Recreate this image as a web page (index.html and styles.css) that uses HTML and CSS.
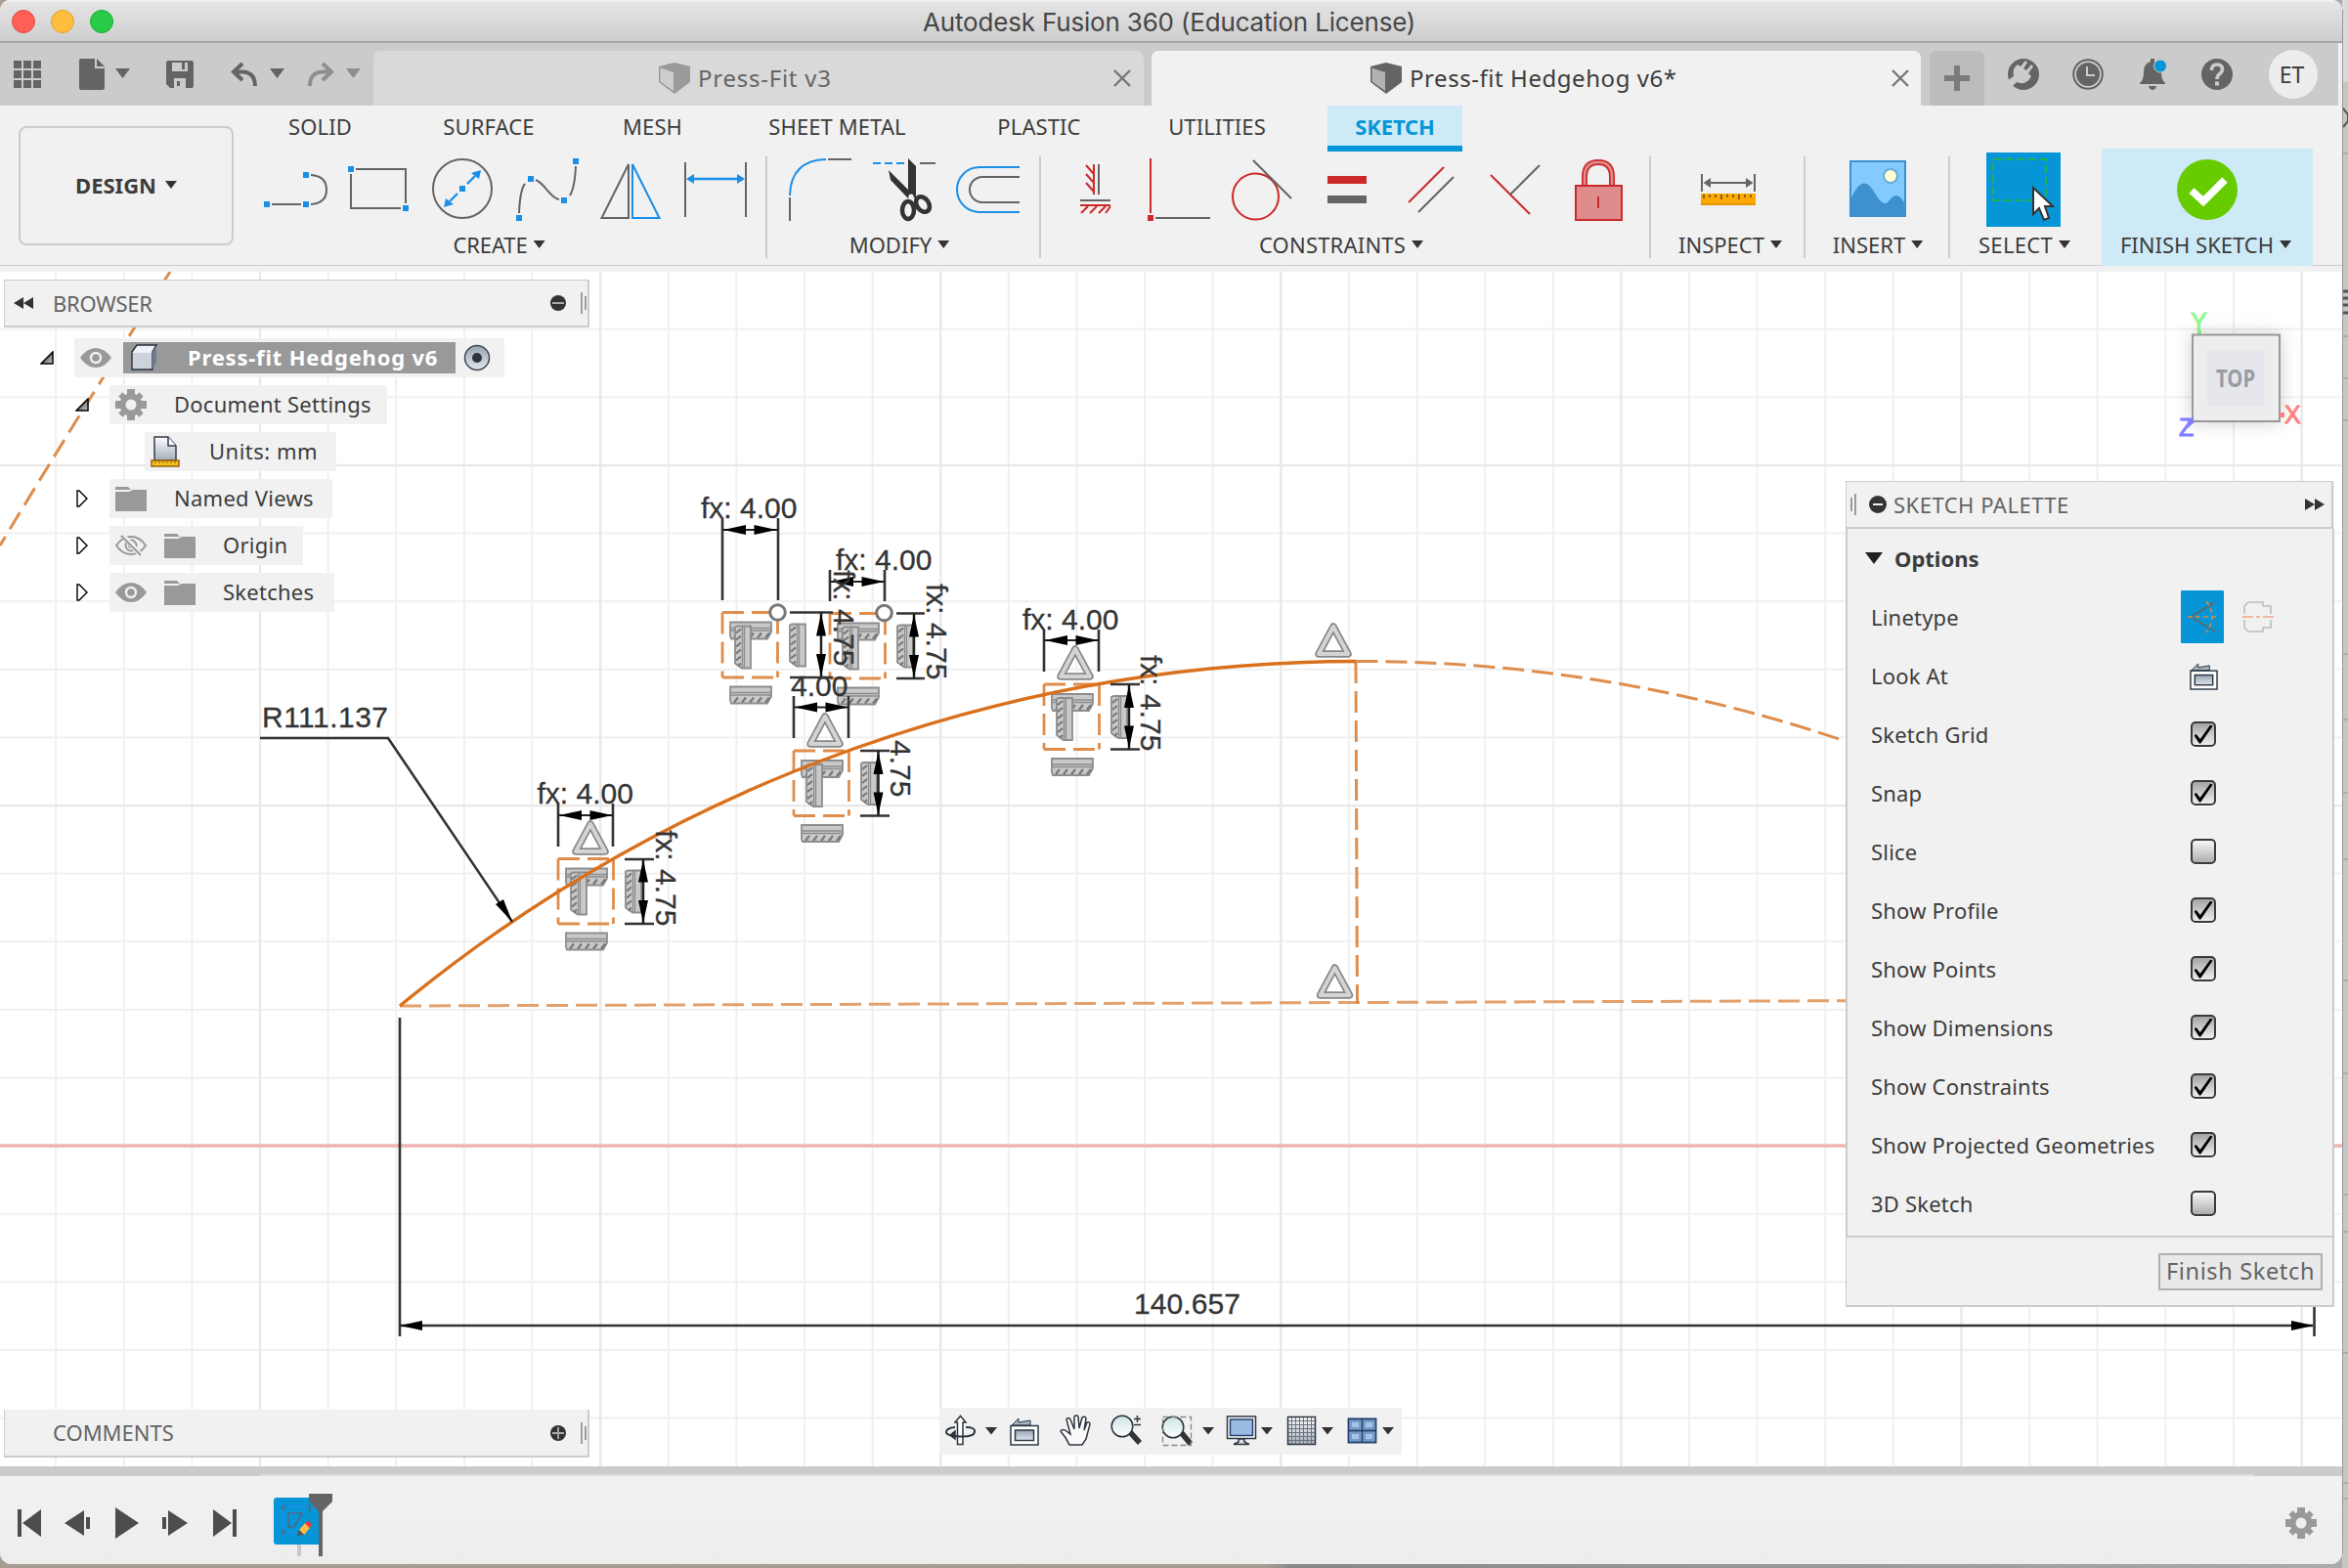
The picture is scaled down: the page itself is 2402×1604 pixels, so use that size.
FILE: index.html
```html
<!DOCTYPE html>
<html lang="en">
<head>
<meta charset="utf-8">
<title>Autodesk Fusion 360 (Education License)</title>
<link rel="stylesheet" href="styles.css">
</head>
<body>
<svg class="defs" width="0" height="0" aria-hidden="true">
  <defs>
    <linearGradient id="steel" x1="0" y1="0" x2="0" y2="1"><stop offset="0" stop-color="#fff"/><stop offset="1" stop-color="#a4adba"/></linearGradient>
    <linearGradient id="lens" x1="0" y1="0" x2="0" y2="1"><stop offset="0" stop-color="#cfe5e2"/><stop offset="1" stop-color="#fbffff"/></linearGradient>
    <linearGradient id="screen" x1="0" y1="0" x2="0" y2="1"><stop offset="0" stop-color="#98a3b3"/><stop offset="1" stop-color="#e0e6ee"/></linearGradient>
    <linearGradient id="corner" x1="0" y1="0" x2="1" y2="1"><stop offset="0" stop-color="#222"/><stop offset="1" stop-color="#ccc"/></linearGradient>
    <symbol id="eye" viewBox="0 0 32 22"><path d="M0 11Q7 1 16 1T32 11Q25 21 16 21T0 11Z" fill="#999"/><circle cx="16" cy="11" r="5" fill="none" stroke="#f1f1f1" stroke-width="2.4"/></symbol>
    <symbol id="eye-off" viewBox="0 0 32 22"><g fill="none" stroke="#999" stroke-width="2"><path d="M1 11Q7 2 16 2T31 11Q25 20 16 20T1 11Z"/><circle cx="16" cy="11" r="5.5"/><circle cx="16" cy="11" r="2"/></g><path d="M7 0 27 22" stroke="#f1f1f1" stroke-width="5"/><path d="M6 1 26 21" stroke="#999" stroke-width="2"/></symbol>
    <symbol id="folder" viewBox="0 0 32 26"><path d="M0 1H13L16 4H0ZM0 6H14L18 4H32V26H0Z" fill="#999"/></symbol>
    <symbol id="gear" viewBox="-16 -16 32 32"><g fill="#999"><path id="cog" d="M-4-16H4V-8H-4ZM-4 8H4V16H-4ZM-16-4H-8V4H-16ZM8-4H16V4H8Z"/><path transform="rotate(45)" d="M-3-15H3V-8H-3ZM-3 8H3V15H-3ZM-15-3H-8V3H-15ZM8-3H15V3H8Z"/></g><circle r="8.5" fill="none" stroke="#999" stroke-width="6"/></symbol>
    <symbol id="twist" viewBox="0 0 14 14"><path d="M1 13H13V1Z" fill="url(#corner)" stroke="#000" stroke-width="1.5"/></symbol>
    <symbol id="closed" viewBox="0 0 14 18"><path d="M2 1V17H4L12 9 4 1Z" fill="#fff" stroke="#000" stroke-width="1.4"/></symbol>
    <symbol id="look" viewBox="0 0 30 30"><path d="M2 9 9 2V6L21 4V9Z" fill="#a5b1ba" stroke="#2d3845"/><rect x="1" y="9.500" width="28" height="19.500" fill="#fff" stroke="#2d3845" stroke-width="1.5"/><rect x="5.500" y="14" width="19" height="10.500" fill="url(#screen)" stroke="#2d3845" stroke-width="1.5"/></symbol>
    <symbol id="cube" viewBox="0 0 32 32"><path d="M0 4 16 0 32 4V20L16 32 0 20Z" fill="currentColor"/><path d="M1.500 5.500 15 10V29L1.500 19.500Z" fill="#fff" opacity=".5"/></symbol>
    <symbol id="close" viewBox="0 0 18 18"><path d="M1 1 17 17M17 1 1 17" stroke="#777" stroke-width="2.4"/></symbol>

    <g id="tri"><path d="M0 2 15 30H-15Z" fill="none" stroke="#888" stroke-width="7.500" stroke-linejoin="round"/><path d="M0 2 15 30H-15Z" fill="none" stroke="#d4d4d4" stroke-width="4" stroke-linejoin="round"/></g>
    <g id="hc"><path d="M1 1H43V11L39 18H2L1 15Z" fill="#c9c9c9" stroke="#8d8d8d" stroke-width="1.800"/><path d="M1 7H43M1 9.500H43" stroke="#8d8d8d" stroke-width="1.300"/><path d="M5 17 9 12M13 17 17 12M21 17 25 12M29 17 33 12M37 17 41 12" stroke="#777" stroke-width="2.200"/></g>
    <g id="vc"><path d="M18 1V44H9L2 39V2L4 1Z" fill="#c9c9c9" stroke="#8d8d8d" stroke-width="1.800"/><path d="M11.500 1V44M9.500 1V44" stroke="#8d8d8d" stroke-width="1.300"/><path d="M3 8 8 4M3 15 8 11M3 22 8 18M3 29 8 25M3 36 8 32M5 42 8 39" stroke="#777" stroke-width="2.200"/></g>
    <g id="ha"><path d="M0 0H56.500" stroke="#222" stroke-width="2"/><path d="M1 0 24-5V5ZM55.500 0 32.500-5V5Z"/></g>
    <g id="va"><path d="M0 0V66.500" stroke="#222" stroke-width="2.500"/><path d="M0 1-5 24H5ZM0 65.500-5 42.500H5Z"/></g>
    <g id="slot">
      <use href="#hc" x="7" y="9"/><use href="#vc" x="11" y="13"/><use href="#hc" x="7" y="75"/><use href="#vc" x="67" y="11"/>
      <path d="M0 0H56.500M56.500 0V66.500M0 66.500H56.500M0 0V66.500" fill="none" stroke="#de8d4c" stroke-width="2.800" stroke-dasharray="22 8"/>
    </g>
  </defs>
</svg>

<div class="window">
  <header class="titlebar">
    <span class="light red"></span><span class="light amber"></span><span class="light green"></span>
    <h1 class="title">Autodesk Fusion 360 (Education License)</h1>
  </header>

  <nav class="docbar">
    <svg class="quick" viewBox="0 44 382 64" width="382" height="64">
      <g fill="#646464">
        <path d="M14 62h8v8h-8zM24 62h8v8h-8zM34 62h8v8h-8zM14 72h8v8h-8zM24 72h8v8h-8zM34 72h8v8h-8zM14 82h8v8h-8zM24 82h8v8h-8zM34 82h8v8h-8z"/>
        <path d="M83 60H97V70H107V90Q107 92 105 92H83Q81 92 81 90V62Q81 60 83 60ZM99 60 107 68H99Z"/>
        <path d="M118 70H133L125.500 80ZM276 70H291L283.500 80Z"/>
        <path fill-rule="evenodd" d="M172 62H196Q198 62 198 64V88Q198 90 196 90H174L170 86V64Q170 62 172 62ZM176 64V73H192V64H189V71H186V64ZM178 80V90H190V80ZM181 83H184V88H181Z"/>
      </g>
      <path d="M248 65 239 73.500 248 82M240 73.500H248Q261 74 261 88" fill="none" stroke="#646464" stroke-width="4"/>
      <path d="M330 65 339 73.500 330 82M338 73.500H330Q317 74 317 88" fill="none" stroke="#8e8e8e" stroke-width="4"/>
      <path d="M354 70H369L361.500 80Z" fill="#8e8e8e"/>
    </svg>
    <div class="doc inactive"><svg class="cube"><use href="#cube"/></svg><span class="doc-a">Press-Fit v3</span><svg class="close"><use href="#close"/></svg></div>
    <div class="doc active"><svg class="cube"><use href="#cube"/></svg><span class="doc-b">Press-fit Hedgehog v6*</span><svg class="close"><use href="#close"/></svg></div>
    <button class="new" aria-label="New"><svg width="26" height="26" viewBox="0 0 26 26"><path d="M13 0V26M0 13H26" stroke="#7b7b7b" stroke-width="6"/></svg></button>
    <svg class="status" viewBox="2030 44 280 64" width="280" height="64">
      <circle cx="2070" cy="76" r="16" fill="#646464"/>
      <path d="M2054 82 2060 78Q2058 70 2064 66L2067 68 2072 62 2074 64 2070 70 2073 72 2078 66 2080 68 2075 75 2078 78Q2073 88 2063 84L2058 89Z" fill="#cbcbcb"/>
      <circle cx="2136" cy="76" r="14.800" fill="none" stroke="#646464" stroke-width="2"/><circle cx="2136" cy="76" r="12" fill="#646464"/>
      <path d="M2135 68V77H2143" fill="none" stroke="#cbcbcb" stroke-width="2"/>
      <path d="M2200 60H2204V63Q2211 65 2211 74 2211 82 2215 85V86H2189V85Q2193 82 2193 74 2193 65 2200 63ZM2198 88H2206Q2205 92 2202 92T2198 88Z" fill="#646464"/>
      <circle cx="2210" cy="67.500" r="6.500" fill="#0696d7" stroke="#cbcbcb"/>
      <circle cx="2268" cy="76" r="16" fill="#646464"/>
      <path d="M2262.500 72Q2262.500 66 2268 66T2273.500 71C2273.500 76 2268 75 2268 81" fill="none" stroke="#cbcbcb" stroke-width="3.600"/><path d="M2266 83.500h4v4h-4z" fill="#cbcbcb"/>
    </svg>
    <span class="avatar">ET</span>
  </nav>

  <section class="ribbon">
    <button class="workspace">DESIGN <i class="caret"></i></button>
    <div class="tools">
      <ul class="tabs"><li>SOLID</li><li>SURFACE</li><li>MESH</li><li>SHEET METAL</li><li>PLASTIC</li><li>UTILITIES</li><li class="current">SKETCH</li></ul>
      <div class="groups">
        <div class="group create">
          <svg viewBox="250 156 534 80" width="534" height="80">
            <g fill="none" stroke="#646464" stroke-width="2">
              <path d="M278 209H308M318 179Q334 180 334 194T318 209"/>
              <path d="M364 173H415V208M359 178V213H410"/>
              <circle cx="473" cy="193" r="30"/>
              <path d="M531 218Q532 194 537 188M548 184C558 188 562 202 572 204M583 200Q588 192 589 170"/>
              <path d="M643 168V223H615.500ZM701 166V222M763 166V222"/>
            </g>
            <path d="M647 168V223H674.500Z" fill="none" stroke="#1a8fe8" stroke-width="2"/>
            <path d="M704 183H760M478 188 486 180M468 198 460 206" stroke="#1a8fe8" stroke-width="2.400"/>
            <path d="M702 183 710 178V188ZM762 183 754 178V188ZM492 174 490 183 482 177ZM454 212 456 203 464 209Z" fill="#1a8fe8"/>
            <path d="M270 206h6v6h-6zM310 206h6v6h-6zM310 176h6v6h-6zM356 170h6v6h-6zM412 210h6v6h-6zM470 190h6v6h-6zM528 220h6v6h-6zM540 180h6v6h-6zM574 202h6v6h-6zM586 162h6v6h-6z" fill="#1a8fe8"/>
          </svg>
          <span>CREATE<i class="caret"></i></span>
        </div>
        <div class="group modify">
          <svg viewBox="786 156 278 80" width="278" height="80">
            <g fill="none" stroke-width="2">
              <path d="M809 202V226M848 163H872M942 167H958M1044 181H1006A13 13 0 0 0 1006 207H1044" stroke="#646464"/>
              <path d="M809 200Q810 164 846 163M894 167H926" stroke="#1a8fe8"/>
              <path d="M1044 171H1003A23 23 0 0 0 1003 217H1044" stroke="#1a8fe8"/>
            </g>
            <path d="M902 165h4v4h-4zM914 165h4v4h-4z" fill="#f1f1f1"/>
            <path d="M930 162 938 170V203L930 199ZM910 174 934 198 930 203 912 184Z" fill="#333"/>
            <ellipse cx="930" cy="215" rx="6" ry="9" fill="none" stroke="#333" stroke-width="4.500"/>
            <ellipse cx="945" cy="209" rx="6" ry="8.500" transform="rotate(-35 945 209)" fill="none" stroke="#333" stroke-width="4.500"/>
            <circle cx="933" cy="201" r="2.600" fill="#f1f1f1"/>
          </svg>
          <span>MODIFY<i class="caret"></i></span>
        </div>
        <div class="group constraints">
          <svg viewBox="1066 156 622 80" width="622" height="80">
            <g fill="none" stroke="#cc2929" stroke-width="2">
              <path d="M1119 168V199M1111 169 1119 178M1111 178 1119 187M1111 187 1119 196M1105 210H1136M1113 211 1106 218M1122 211 1115 218M1131 211 1124 218M1136 211 1131 218"/>
              <path d="M1177 162V218M1441 207 1477 171M1525 179 1565 219"/><circle cx="1284.500" cy="201" r="23.500"/>
            </g>
            <path d="M1124 168V199M1105 205H1136M1182 223H1238M1282 164 1321 203M1451 217 1487 181M1545 199 1575 169" fill="none" stroke="#646464" stroke-width="2"/>
            <path d="M1174 220h6v6h-6zM1358 180h40v8h-40z" fill="#cc2929"/><path d="M1358 200h40v8h-40z" fill="#646464"/>
            <path d="M1621 190V181Q1621 166 1635 166T1649 181V190" fill="none" stroke="#cc2929" stroke-width="6"/>
            <path d="M1621 190V181Q1621 166 1635 166T1649 181V190" fill="none" stroke="#df8c8c" stroke-width="2.600"/>
            <rect x="1612" y="190" width="47" height="35" fill="#df8c8c" stroke="#cc2929" stroke-width="2"/><path d="M1635 201V213" stroke="#cc2929" stroke-width="2"/>
          </svg>
          <span>CONSTRAINTS<i class="caret"></i></span>
        </div>
        <div class="group inspect">
          <svg viewBox="1690 156 156 80" width="156" height="80">
            <path d="M1741 178V196M1795 178V196M1745 187H1791" stroke="#646464" stroke-width="2"/><path d="M1742.500 187 1750 182V192ZM1793.500 187 1786 182V192Z" fill="#646464"/>
            <path d="M1740 198h56v12h-56z" fill="#ffa800"/><path d="M1740 208h56v2h-56z" fill="#e39400"/>
            <path d="M1743 199V203M1749 199V202M1755 199V202M1761 199V204M1767 199V202M1773 199V202M1779 199V204M1785 199V202M1791 199V202" stroke="#5d4c25" stroke-width="1.500"/>
          </svg>
          <span>INSPECT<i class="caret"></i></span>
        </div>
        <div class="group insert">
          <svg viewBox="1848 156 146 80" width="146" height="80">
            <rect x="1893" y="165" width="56" height="56" fill="#83caff" stroke="#3d91ce" stroke-width="2"/>
            <circle cx="1934" cy="180" r="7" fill="#ffffd0" stroke="#62acdf" stroke-width="2"/>
            <path d="M1893 205C1902 183 1910 184 1917 196Q1926 212 1931 207C1938 198 1942 197 1949 209V221H1893Z" fill="#3d91ce"/>
          </svg>
          <span>INSERT<i class="caret"></i></span>
        </div>
        <div class="group select">
          <svg viewBox="1996 156 154 80" width="154" height="80">
            <path d="M2032 156h76v76h-76z" fill="#0696d7"/><rect x="2039" y="163" width="54" height="42" fill="none" stroke="#22b24c" stroke-width="2" stroke-dasharray="8 4"/>
            <path d="M2080 192V219L2086 213 2091 225 2096 223 2092 211H2100Z" fill="#fff" stroke="#333" stroke-width="2"/>
          </svg>
          <span>SELECT<i class="caret"></i></span>
        </div>
        <div class="group finish">
          <svg viewBox="2150 156 216 80" width="216" height="80"><circle cx="2258" cy="194" r="31" fill="#6c0"/><path d="M2242 195 2254 206 2276 184" fill="none" stroke="#fff" stroke-width="7.500"/></svg>
          <span>FINISH SKETCH<i class="caret"></i></span>
        </div>
      </div>
    </div>
  </section>

  <main class="canvas">
    <svg class="drawing" viewBox="0 278 2396 1222" width="2396" height="1222">
      <defs>
        <pattern id="minor" x="265" y="823" width="69.620" height="69.620" patternUnits="userSpaceOnUse"><path d="M0 0H69.620M0 0V69.620" stroke="#f0f0f0" stroke-width="4" fill="none"/></pattern>
        <pattern id="major" x="265" y="823" width="348.100" height="348.100" patternUnits="userSpaceOnUse"><path d="M0 1H349M1 0V349" stroke="#e8e8e8" stroke-width="2.400" fill="none"/></pattern>
      </defs>
      <rect x="0" y="278" width="2396" height="1222" fill="url(#minor)"/>
      <rect x="0" y="278" width="2396" height="1222" fill="url(#major)"/>
      <path d="M0 1172H2396" stroke="#efb4b4" stroke-width="3.400"/>

      <use href="#slot" x="739" y="626.500"/><use href="#slot" x="849" y="627.500"/><use href="#slot" x="812" y="768"/><use href="#slot" x="1068" y="700"/><use href="#slot" x="571" y="878.500"/>
      <use href="#tri" x="604" y="841"/><use href="#tri" x="844" y="731"/><use href="#tri" x="1100" y="662"/><use href="#tri" x="1364" y="639"/><use href="#tri" x="1365.500" y="988"/>

      <g fill="none" stroke="#de8d4c" stroke-width="3">
        <path d="M174 278Q80 425 0 558" stroke-dasharray="20 9"/>
        <path d="M409 1029 2366 1022" stroke="#e3a06b" stroke-dasharray="22 8"/>
        <path d="M1387 677 1388.500 1027" stroke-dasharray="22 8"/>
        <path d="M1387.500 676.500A1546 1546 0 0 1 2366 1022" stroke-dasharray="22 8"/>
        <path d="M409 1029A1546 1546 0 0 1 1387.500 676.500" stroke="#d9701c" stroke-width="3.400"/>
      </g>

      <g fill="none" stroke="#333" stroke-width="2.600">
        <path d="M266 755H397L524 943M409 1041V1367M409 1356H2366M2367.500 1336V1367"/>
        <path d="M739 530V614M796 530V614M849 583V615M905 583V615M812 712V755M868 712V755M1068 644V687M1124 644V687M571 822V866M627 822V866"/>
        <path d="M808 626.500H852M808 693H852M917 627.500H946M917 694H946M880 768H910M880 834.500H910M1136 700H1166M1136 766.500H1166M639 879H669M639 945H669"/>
      </g>
      <g fill="#000">
        <use href="#ha" x="739" y="542"/><use href="#ha" x="849" y="595"/><use href="#ha" x="812" y="723.500"/><use href="#ha" x="1068" y="655"/><use href="#ha" x="571" y="834"/>
        <use href="#va" x="840" y="626.500"/><use href="#va" x="935" y="627.500"/><use href="#va" x="898.500" y="768"/><use href="#va" x="1155" y="700"/><use href="#va" x="658" y="878.500"/>
        <path d="M524 943 507 925 515 920ZM409 1356 432 1351V1361ZM2367 1356 2344 1351V1361Z"/>
      </g>
      <g fill="#fff" stroke="#777" stroke-width="3"><circle cx="795.500" cy="626.500" r="7.800"/><circle cx="904.500" cy="627" r="7.800"/></g>
      <g class="dim">
        <text x="268" y="743.500" textLength="129">R111.137</text>
        <text x="1160" y="1343.500" textLength="109">140.657</text>
        <text x="717" y="530">fx: 4.00</text><text x="855" y="583">fx: 4.00</text><text x="809" y="711.500">4.00</text><text x="1046" y="643.500">fx: 4.00</text><text x="549.500" y="822">fx: 4.00</text>
        <text transform="translate(852.500 583) rotate(90)">fx: 4.75</text><text transform="translate(947.500 597) rotate(90)">fx: 4.75</text><text transform="translate(910.500 757) rotate(90)">4.75</text><text transform="translate(1166.500 670) rotate(90)">fx: 4.75</text><text transform="translate(670.500 849) rotate(90)">fx: 4.75</text>
      </g>

      <g class="viewcube">
        <text x="2241" y="338" fill="#8dfb8d" stroke="#8dfb8d">Y</text><path d="M2248 338h4v5h-4z" fill="#8dfb8d"/>
        <rect class="cube-face" x="2243" y="342.500" width="89" height="88.500" fill="#eee" fill-opacity=".95" stroke="#999" stroke-width="2"/><path d="M2258 358h58v58h-58z" fill="#e5e7ec"/>
        <text class="top" x="2267" y="396" textLength="40" lengthAdjust="spacingAndGlyphs">TOP</text>
        <text x="2337" y="433" fill="#ff8080" stroke="#ff8080">X</text><path d="M2332 422h5v5h-5z" fill="#ff8080"/>
        <text x="2229" y="446" fill="#7f7fff" stroke="#7f7fff">Z</text><path d="M2238 430 2246 431 2238 438Z" fill="#7f7fff"/>
      </g>
    </svg>

    <aside class="browser">
      <header class="panel-head">
        <svg width="20" height="12" viewBox="0 0 20 12"><path d="M0 6 10 0V12ZM10 6 20 0V12Z" fill="#333"/></svg>
        <span class="name">BROWSER</span>
        <svg class="knob" width="16" height="16" viewBox="0 0 16 16"><circle cx="8" cy="8" r="8" fill="#333"/><path d="M2 8H14" stroke="#aaa" stroke-width="2"/></svg>
        <svg class="grip" width="6" height="22" viewBox="0 0 6 22"><path d="M1 0V22M5 4V18" stroke="#888" stroke-width="1.600"/></svg>
      </header>
      <ul class="tree">
        <li class="l1"><svg class="tw"><use href="#twist"/></svg><div class="node root"><svg class="eye"><use href="#eye"/></svg>
          <b><svg width="28" height="28" viewBox="0 0 28 28"><path d="M1 8 6 1H26L22 8V26H1Z" fill="#eef1f5" stroke="#222c3a" stroke-width="1.400"/><path d="M22 8 26 2V19L22 26Z" fill="#6f7c90"/><path d="M2 9H21V25H2Z" fill="#cdd3db"/></svg><em>Press-fit Hedgehog v6</em></b>
          <svg class="radio" width="28" height="28" viewBox="0 0 28 28"><circle cx="14" cy="14" r="12.500" fill="url(#screen)" stroke="#3f4650" stroke-width="1.500"/><circle cx="14" cy="14" r="5" fill="#2c333d"/></svg></div></li>
        <li class="l2"><svg class="tw"><use href="#twist"/></svg><div class="node w284"><svg class="gear"><use href="#gear"/></svg><span>Document Settings</span></div></li>
        <li class="l3"><div class="node w196"><svg class="units" width="30" height="32" viewBox="0 0 30 32"><path d="M4 1H18L26 10V25H4Z" fill="url(#steel)" stroke="#333d4d" stroke-width="1.500"/><path d="M18 1V10H26" fill="#fff" stroke="#333d4d" stroke-width="1.500"/><path d="M1 25H29V31H1Z" fill="#f2c21d" stroke="#9c5c0c" stroke-width="1.500"/><path d="M5 26V28M9 26V28M13 26V28M17 26V28M21 26V28M25 26V28" stroke="#9c5c0c"/></svg><span class="unit-name">Units: mm</span></div></li>
        <li class="l2"><svg class="tw shut"><use href="#closed"/></svg><div class="node w228"><svg class="folder"><use href="#folder"/></svg><span>Named Views</span></div></li>
        <li class="l2"><svg class="tw shut"><use href="#closed"/></svg><div class="node w198"><svg class="eye"><use href="#eye-off"/></svg><svg class="folder"><use href="#folder"/></svg><span>Origin</span></div></li>
        <li class="l2"><svg class="tw shut"><use href="#closed"/></svg><div class="node w230"><svg class="eye"><use href="#eye"/></svg><svg class="folder"><use href="#folder"/></svg><span>Sketches</span></div></li>
      </ul>
    </aside>

    <aside class="palette">
      <header class="panel-head">
        <svg width="6" height="22" viewBox="0 0 6 22"><path d="M1 4V18M5 0V22" stroke="#888" stroke-width="1.600"/></svg>
        <svg class="knob" width="18" height="18" viewBox="0 0 18 18"><circle cx="9" cy="9" r="9" fill="#333"/><path d="M4 9H14" stroke="#eee" stroke-width="2"/></svg>
        <span class="name">SKETCH PALETTE</span>
        <svg class="fwd" width="20" height="12" viewBox="0 0 20 12"><path d="M0 0 10 6 0 12ZM10 0 20 6 10 12Z" fill="#333"/></svg>
      </header>
      <div class="options">
        <h2><svg width="18" height="12" viewBox="0 0 18 12"><path d="M0 0H18L9 12Z" fill="#222"/></svg>Options</h2>
        <div class="row"><span>Linetype</span><div class="ctl wide"><svg width="44" height="54" viewBox="0 0 44 54"><rect width="44" height="54" rx="1" fill="#0696d7"/><path d="M35 12 10 27 35 42" fill="none" stroke="#646464" stroke-width="1.600"/><path d="M7 27H38" stroke="#e0883c" stroke-width="1.600" stroke-dasharray="5 3"/><path d="M26 11Q38 27 26 43" fill="none" stroke="#e0883c" stroke-width="1.400" stroke-dasharray="5 3"/></svg><svg class="center-line" width="32" height="32" viewBox="0 0 32 32"><path d="M2 13V5L6 1H21V5H29V13M2 19V27L6 31H21V27H29V19" fill="none" stroke="#bdbdbd" stroke-width="1.600"/><path d="M0 16H11M14 16H18M21 16H32" stroke="#f2b998" stroke-width="1.800"/></svg></div></div>
        <div class="row"><span>Look At</span><div class="ctl"><svg class="lookat" width="29" height="29"><use href="#look"/></svg></div></div>
        <label class="row"><span>Sketch Grid</span><i class="check on"></i></label>
        <label class="row"><span>Snap</span><i class="check on"></i></label>
        <label class="row"><span>Slice</span><i class="check"></i></label>
        <label class="row"><span>Show Profile</span><i class="check on"></i></label>
        <label class="row"><span>Show Points</span><i class="check on"></i></label>
        <label class="row"><span>Show Dimensions</span><i class="check on"></i></label>
        <label class="row"><span>Show Constraints</span><i class="check on"></i></label>
        <label class="row"><span>Show Projected Geometries</span><i class="check on"></i></label>
        <label class="row"><span>3D Sketch</span><i class="check"></i></label>
      </div>
      <footer><button>Finish Sketch</button></footer>
    </aside>

    <aside class="comments panel-head">
      <span class="name">COMMENTS</span>
      <svg class="knob" width="16" height="16" viewBox="0 0 16 16"><circle cx="8" cy="8" r="8" fill="#333"/><path d="M2 8H14M8 2V14" stroke="#aaa" stroke-width="1.800"/></svg>
      <svg class="grip" width="6" height="22" viewBox="0 0 6 22"><path d="M1 0V22M5 4V18" stroke="#888" stroke-width="1.600"/></svg>
    </aside>

    <div class="navbar">
      <svg viewBox="961 1440 473 48" width="473" height="48">
        <g stroke="#2d3540" stroke-width="1.500">
          <path d="M982.500 1448.500 988 1455H985V1477.500H979.500V1455H977Z" fill="#fff"/>
          <path d="M977 1460Q968 1461 968 1465T982 1469.500 997 1465 988 1460" fill="none" stroke-width="2"/><path d="M972 1468 977 1464V1472Z" fill="#2d3540"/>
          <path d="M1094 1478Q1091 1471 1085 1464 1087 1461 1091 1464L1095 1467 1091 1452Q1093 1449 1095 1452L1099 1462 1099 1449Q1101 1447 1103 1449L1104 1461 1107 1450Q1110 1448 1111 1451L1109 1463 1112 1455Q1115 1454 1115 1457L1111 1472 1107 1478Z" fill="#fafafa"/>
          <path d="M1155 1467 1158 1464 1167 1474 1164 1477ZM1207 1467 1210 1464 1219 1475 1216 1478Z" fill="#333"/>
          <circle cx="1148" cy="1459" r="10.800" fill="url(#lens)"/><circle cx="1200" cy="1460" r="10.800" fill="url(#lens)"/>
          <path d="M1160 1451.500H1167M1163.500 1448V1455M1160 1457.500H1167" fill="none"/>
          <rect x="1255.500" y="1449" width="29" height="22.500" fill="#fff"/><rect x="1258.500" y="1452" width="23" height="16.500" fill="#9bbce2" stroke="#23406c"/><path d="M1267 1472H1273V1475L1278 1477.500H1262L1267 1475Z" fill="#d7dde4"/>
          <rect x="1317.500" y="1449.500" width="28" height="28" fill="url(#steel)"/>
          <path d="M1321.500 1450V1477M1325.500 1450V1477M1329.500 1450V1477M1333.500 1450V1477M1337.500 1450V1477M1341.500 1450V1477M1318 1453.500H1345M1318 1457.500H1345M1318 1461.500H1345M1318 1465.500H1345M1318 1469.500H1345M1318 1473.500H1345" stroke="#6b737d" stroke-width="1"/>
          <path d="M1379.500 1451.500h28v24h-28zM1393.500 1451.500v24M1379.500 1463.500h28" fill="#93b8e2" stroke="#23406c" stroke-width="1.800"/><path d="M1382 1454h9v7h-9zM1396 1454h9v7h-9zM1382 1466h9v7h-9zM1396 1466h9v7h-9z" fill="#a6c3e6" stroke="#6b8fc0"/>
        </g>
        <rect x="1189.500" y="1449.500" width="29" height="29" fill="none" stroke="#888" stroke-width="1.300" stroke-dasharray="6 3"/>
        <path d="M1008 1460H1020L1014 1467.500ZM1230 1460H1242L1236 1467.500ZM1290 1460H1302L1296 1467.500ZM1352 1460H1364L1358 1467.500ZM1414 1460H1426L1420 1467.500Z" fill="#333"/>
        <use href="#look" x="1033" y="1449" width="30" height="30"/>
      </svg>
    </div>
  </main>

  <footer class="timeline">
    <svg viewBox="0 1510 350 90" width="350" height="90">
      <path d="M18 1544h4v28h-4zM42 1544V1572L23 1558ZM86 1545V1571L66 1558ZM88 1552h4v12h-4zM118 1542 142 1558 118 1574ZM166 1552h4v12h-4zM172 1545 192 1558 172 1571ZM218 1544 237 1558 218 1572ZM238 1544h4v28h-4z" fill="#4d4d4d"/>
      <path d="M304 1580h4v12h-4z" fill="#c8c8c8"/><rect x="280" y="1532" width="48" height="48" rx="3" fill="#0696d7"/>
      <path d="M289 1541H317V1548M289 1541V1568H305M295 1548H309L301 1562H295Z" fill="none" stroke="#4c6b86" stroke-width="1.600"/><path d="M289 1545V1564M293 1541H313M293 1568H304" stroke="#1a8fe8" stroke-width="2"/>
      <path d="M306 1565 312 1558 317 1563 311 1570Z" fill="#fb4"/><path d="M312 1558 316 1556 319 1560 317 1563Z" fill="#f33"/><path d="M306 1565 311 1570 304 1571Z" fill="#555"/>
      <path d="M316 1528H340V1536L330 1546V1592H326V1546L316 1536Z" fill="#646464"/>
    </svg>
    <svg class="gear"><use href="#gear"/></svg>
  </footer>
</div>
<svg class="edge" width="6" height="1604" viewBox="2396 0 6 1604"><path d="M2396 0h6v84h-6z" fill="#d9dadb"/><path d="M2396 110 2402 117 2402 124 2397 130" fill="none" stroke="#555" stroke-width="2"/><path d="M2396 298h6M2396 305h6M2396 312h6M2396 320h6" stroke="#50545a" stroke-width="3"/><path d="M2396 157h6M2396 344h6M2396 387h6M2396 430h6M2396 669h6M2396 736h6M2396 811h6M2396 879h6M2396 1003h6M2396 1098h6M2396 1222h6M2396 1260h6M2396 1384h6M2396 1517h6M2396 1533h6" stroke="#a4a4a4" stroke-width="1.500"/><path d="M2396.500 10V1590" stroke="#999"/></svg>
</body>
</html>
```
FILE: styles.css
```css
* { box-sizing: border-box; }
body {
  margin: 0;
  width: 2402px;
  height: 1604px;
  display: flex;
  overflow: hidden;
  background: linear-gradient(90deg, #a89d92 1292px, #888 1324px, #aaa 2396px, #c6c6c6 2396px);
  font: 22px/1 "Noto Sans", "Open Sans", sans-serif;
  color: #3c3c3c;
}
ul, h1, h2 { margin: 0; padding: 0; list-style: none; }
button { font: inherit; color: inherit; padding: 0; }
svg { display: block; flex: none; }
.defs { position: absolute; }
.window {
  width: 2396px;
  height: 1600px;
  flex: none;
  display: flex;
  flex-direction: column;
  background: #f1f1f1;
  border-radius: 10px 10px 12px 12px;
  overflow: hidden;
}

.titlebar {
  height: 44px;
  display: flex;
  align-items: center;
  gap: 16px;
  padding-left: 12px;
  background: linear-gradient(#f4f4f4, #e4e4e4 3px, #cecece);
  border-bottom: 2px solid #a6a6a6;
}
.light { width: 24px; height: 24px; border-radius: 50%; border: 1px solid; margin-top: 2px; }
.red { background: #ff5f57; border-color: #e2463f; }
.amber { background: #ffbd3e; border-color: #e09f2e; }
.green { background: #2aca49; border-color: #1bac30; }
.title {
  margin-left: 812px;
  margin-top: 4px;
  white-space: nowrap;
  font: 400 26px/30px Inter, sans-serif;
  letter-spacing: -0.18px;
  color: #464646;
}

.docbar { height: 64px; display: flex; align-items: flex-end; background: #cbcbcb; border-right: 4px solid #f1f1f1; }
.doc { height: 56px; display: flex; align-items: center; border-radius: 7px 7px 0 0; font-size: 24px; white-space: nowrap; }
.doc .cube { width: 32px; height: 32px; margin: 0 8px 0 0; }
.doc .close { width: 18px; height: 18px; margin-left: auto; }
.inactive { width: 788px; margin-right: 8px; padding: 0 13px 0 292px; background: #d9d9d9; color: #666; }
.inactive .cube { color: #9a9a9a; }
.active { width: 787px; padding: 0 12px 0 224px; background: #f1f1f1; color: #3c3c3c; }
.active .cube { color: #646464; }
.doc-a { letter-spacing: 0.75px; }
.doc-b { letter-spacing: 0.55px; }
.new { width: 56px; height: 56px; margin-left: 9px; border: 0; border-radius: 7px 7px 0 0; background: #bcbcbc; display: grid; place-items: center; }
.avatar { width: 50px; height: 50px; margin: 0 0 7px 11px; padding-right: 3px; border-radius: 50%; background: #ededed; display: grid; place-items: center; font-size: 23px; }

.ribbon { height: 170px; display: flex; padding-bottom: 6px; background: linear-gradient(#f1f1f1 163px, #ccc 163px, #ccc 164px, #f1f1f1 164px); }
.workspace { width: 220px; height: 122px; margin: 21px 11px 0 19px; padding-bottom: 2px; border: 2px solid #ccc; border-radius: 8px; background: none; font-weight: 700; display: flex; align-items: center; justify-content: center; gap: 9px; }
.caret { display: inline-block; width: 12px; height: 8px; background: #333; clip-path: polygon(0 0, 100% 0, 50% 100%); }
.tools { flex: 1; display: flex; flex-direction: column; }
.tabs { height: 44px; display: grid; grid-template-columns: 155px 190px 145px 233px 180px 184px 180px; justify-items: center; letter-spacing: 0.1px; }
.tabs li { line-height: 42px; }
.tabs .current { width: 138px; height: 47px; text-align: center; font-weight: 700; color: #0696d7; background: #cdeaf6; border-bottom: 6px solid #0696d7; letter-spacing: -0.1px; }
.groups { flex: 1; display: flex; align-items: stretch; }
.group { display: flex; flex-direction: column; align-items: center; padding-top: 4px; }
.group:not(.finish, .select) { border-right: 2px solid #ccc; border-image: linear-gradient(transparent 9px, #ccc 9px, #ccc 111px, transparent 111px) 1; }
.group span { display: flex; align-items: center; gap: 6px; height: 28px; white-space: nowrap; }
.create { width: 535px; } .create span { margin-right: 12px; letter-spacing: -0.1px; }
.modify { width: 280px; } .modify span { margin-right: 8px; }
.constraints { width: 624px; } .constraints svg { margin-left: 2px; } .constraints span { margin-right: 8px; letter-spacing: 0.2px; }
.inspect { width: 158px; } .inspect svg { margin-left: 2px; } .inspect span { margin-left: 6px; }
.insert { width: 148px; } .insert svg { margin-left: 2px; } .insert span { margin-left: 2px; }
.select { width: 155px; } .select span { margin-right: 3px; letter-spacing: 0.3px; }
.finish { width: 216px; background: #cdeaf6; } .finish span { margin-right: 3px; }

.canvas { position: relative; height: 1222px; background: #fff; }
.drawing { position: absolute; inset: 0; }
.dim { font: 30px "Liberation Sans", Arial, sans-serif; fill: #333; stroke: #333; stroke-width: 0.3px; }
.viewcube { font: 25px "Liberation Sans", Arial, sans-serif; stroke-width: 1px; }
.viewcube .top { font: 700 25px "Noto Sans", sans-serif; fill: #999ca3; }
.cube-face { filter: drop-shadow(0 0 9px #0003); }

.panel-head { display: flex; align-items: center; background: #f1f1f1; border: solid #ccc; border-width: 1px 2px 2px 1px; color: #646464; }
.name { margin-top: -1px; }
.browser { position: absolute; left: 4px; top: 8px; width: 599px; }
.browser .panel-head { height: 49px; padding-left: 9px; }
.browser .name { margin-left: 20px; letter-spacing: -0.25px; }
.knob { margin-left: auto; }
.grip { margin: 0 1px 0 15px; }
.tree { padding-top: 11px; }
.tree li { height: 40px; margin-bottom: 8px; display: flex; align-items: center; }
.l1 { padding-left: 37px; } .l2 { padding-left: 73px; } .l3 { padding-left: 144px; }
.tw { width: 14px; height: 14px; margin-right: 21px; }
.shut { height: 18px; }
.node { height: 40px; padding-left: 6px; display: flex; align-items: center; background: #f1f1f1; white-space: nowrap; letter-spacing: 0.25px; }
.node span { margin: -2px 0 0 28px; }
.node .unit-name { margin-left: 30px; letter-spacing: 0.5px; }
.eye { width: 32px; height: 22px; }
.eye + .folder { margin-left: 18px; }
.folder { width: 32px; height: 26px; }
.gear { width: 32px; height: 32px; }
.root { width: 440px; }
.root b { width: 340px; height: 32px; margin-left: 12px; padding-left: 8px; display: flex; align-items: center; background: #999; color: #fff; }
.root em { font-style: normal; margin: -2px 0 0 30px; letter-spacing: 0.8px; }
.root .radio { margin-left: 8px; }
.w284 { width: 284px; } .w196 { width: 196px; } .w228 { width: 228px; } .w198 { width: 198px; } .w230 { width: 230px; }

.palette { position: absolute; left: 1888px; top: 214px; width: 500px; height: 845px; display: flex; flex-direction: column; background: #f1f1f1; }
.palette .panel-head { height: 49px; margin-right: 1px; padding: 0 7px 0 4px; }
.palette .knob { margin: 0 7px 0 13px; }
.palette .name { letter-spacing: 0.5px; }
.palette .fwd { margin-left: auto; }
.options { height: 725px; flex: none; padding: 0 20px 0 24px; border: solid #ccc; border-width: 0 2px 2px; display: flex; flex-direction: column; letter-spacing: 0.2px; }
.options h2 { height: 60px; flex: none; margin-left: -6px; display: flex; align-items: center; gap: 12px; font-size: 22px; letter-spacing: 0; }
.row { height: 60px; flex: none; display: flex; align-items: center; }
.ctl { margin-left: auto; width: 126px; display: flex; align-items: center; }
.wide { width: 135px; }
.center-line { margin-left: 19px; }
.check { width: 26px; height: 26px; margin: 0 99px 0 auto; border: 2px solid #3a3a3a; border-radius: 5px; background: linear-gradient(#f7f7f7, #adadad); box-shadow: 0 1px 1px #fff; display: grid; place-items: center; }
.on { background: linear-gradient(#a4a4a4, #eee); }
.on::after { content: ""; width: 19px; height: 19px; background: #000; clip-path: polygon(0 56%, 12% 50%, 33% 76%, 88% 0, 100% 7%, 36% 100%, 28% 100%); }
.palette footer { flex: 1; display: flex; align-items: center; justify-content: flex-end; padding-right: 10px; border: solid #ccc; border-width: 0 2px 2px 1px; }
.palette footer button { width: 168px; height: 38px; border: 2px solid #b0b0b0; border-radius: 1px; background: #e9e9e9; color: #646464; font-size: 23.5px; letter-spacing: 0.65px; white-space: nowrap; }

.comments { position: absolute; left: 4px; top: 1164px; width: 599px; height: 49px; border-top: 0; padding-left: 49px; }
.navbar { position: absolute; left: 961px; top: 1162px; background: #f1f1f1; }

.timeline { flex: 1; display: flex; align-items: center; justify-content: space-between; padding-right: 26px; border-top: 8px solid #cbcbcb; background: linear-gradient(90deg, #cbcbcb 266px, #dedede 266px, #dedede 2306px, #cbcbcb 2306px) 0 0 / 100% 2px no-repeat, linear-gradient(#f2f2f2, #ededed); }
.timeline svg { margin-top: 2px; }
.timeline .gear { margin-top: 8px; }
```
